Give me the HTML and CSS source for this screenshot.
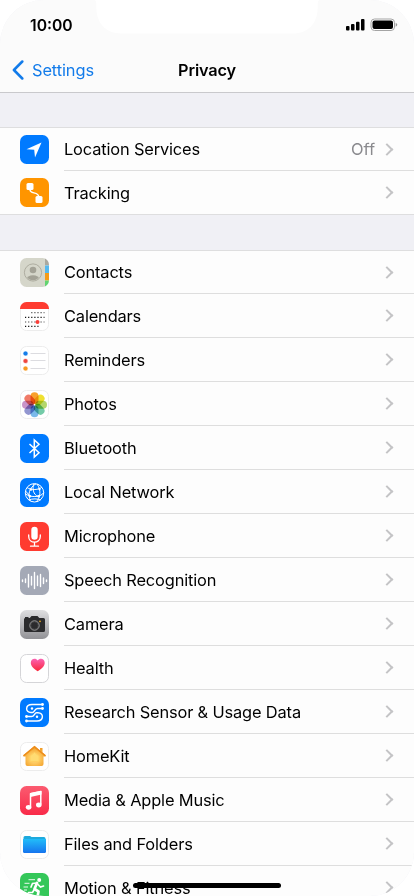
FILE: index.html
```html
<!DOCTYPE html>
<html lang="en">
<head>
<meta charset="utf-8">
<meta name="viewport" content="width=device-width, initial-scale=1">
<title>Privacy</title>
<link rel="stylesheet" href="styles.css">
</head>
<body>
<div class="screen">
  <header class="header">
    <svg class="notch" viewBox="0 0 224 34"><path d="M0 0C2 2 1 5 1.500 11C3 25 12 33.500 26 33.500H198C212 33.500 221 25 222.500 11C223 5 222 2 224 0Z" fill="#fff"/></svg>
    <div class="status">
      <span class="time">10:00</span>
      <svg class="status-icons" width="52" height="14" viewBox="0 0 52 14">
        <rect x="0" y="8" width="3.500" height="4.500" rx="1"/><rect x="5" y="6" width="3.500" height="6.500" rx="1"/><rect x="10" y="3.700" width="3.500" height="8.800" rx="1"/><rect x="15" y="1" width="3.500" height="11.500" rx="1"/>
        <rect x="25" y="1" width="23.500" height="11.500" rx="3.500" fill="#fff" stroke="#a4a4a4"/><rect x="26.500" y="2.500" width="20.500" height="8.500" rx="2"/><path d="M49.700 4.800Q51.300 5.600 51.300 6.800T49.700 8.800Z" fill="#999"/>
      </svg>
    </div>
    <nav class="navbar">
      <a class="back"><svg width="12" height="20" viewBox="0 0 12 20"><path d="M10.300 1.500L1.900 10L10.300 18.500" fill="none" stroke="#127bea" stroke-width="2.500" stroke-linecap="round" stroke-linejoin="round"/></svg><span>Settings</span></a>
      <h1>Privacy</h1>
    </nav>
  </header>
  <main>
    <section class="group">
      <div class="row">
        <svg class="icon" viewBox="0 0 29 29"><rect width="29" height="29" rx="6.500" fill="#007aff"/><path d="M21.500 7.500L6.500 14.300L14.200 14.800L15 22.500Z" fill="#fff"/></svg>
        <div class="cell"><span class="label">Location Services</span><span class="value">Off</span><i class="chevron"></i></div>
      </div>
      <div class="row">
        <svg class="icon" viewBox="0 0 29 29"><rect width="29" height="29" rx="6.500" fill="#ff9500"/><path d="M10 9V11.500C10 17 19 12.500 19 20" fill="none" stroke="#fff" stroke-width="1.500"/><rect x="6.500" y="5" width="7" height="7" rx="1.500" fill="#fff"/><rect x="15.500" y="18" width="7" height="7" rx="1.500" fill="#fff"/></svg>
        <div class="cell"><span class="label">Tracking</span><i class="chevron"></i></div>
      </div>
    </section>
    <section class="group">
      <div class="row">
        <svg class="icon" viewBox="0 0 29 29"><defs><clipPath id="tile"><rect width="29" height="29" rx="6.500"/></clipPath><clipPath id="face"><circle cx="13" cy="14.500" r="7.800"/></clipPath></defs><g clip-path="url(#tile)"><path d="M0 0H25V29H0Z" fill="#d5d6ca"/><path d="M25 0H29V7.500H25Z" fill="#aaa99f"/><path d="M25 7.500H29V15H25Z" fill="#55b9ee"/><path d="M25 15H29V22.500H25Z" fill="#f69b16"/><path d="M25 22.500H29V29H25Z" fill="#62d471"/></g><circle cx="13" cy="14.500" r="8.600" fill="none" stroke="#a3a296" stroke-width=".8"/><g clip-path="url(#face)" fill="#a3a296"><circle cx="13" cy="12" r="3.300"/><ellipse cx="13" cy="21" rx="6.500" ry="3.700"/></g></svg>
        <div class="cell"><span class="label">Contacts</span><i class="chevron"></i></div>
      </div>
      <div class="row">
        <svg class="icon" viewBox="0 0 29 29"><rect x=".5" y=".5" width="28" height="28" rx="6" fill="#fff" stroke="#ececec"/><path d="M0 7V6.500A6.500 6.500 0 0 1 6.500 0H22.500A6.500 6.500 0 0 1 29 6.500V7Z" fill="#fe3b30"/><g fill="none" stroke="#111" stroke-width="1.200" stroke-dasharray="1.200 1.900"><path d="M11.200 10.700H24.500" stroke="#555"/><path d="M5 15.400H24.500"/><path d="M5 20H24.500" stroke="#444"/><path d="M5 24.400H18.500"/></g><circle cx="17.500" cy="20" r="2" fill="#fc3e39"/></svg>
        <div class="cell"><span class="label">Calendars</span><i class="chevron"></i></div>
      </div>
      <div class="row">
        <svg class="icon" viewBox="0 0 29 29"><rect x=".5" y=".5" width="28" height="28" rx="6" fill="#fff" stroke="#ececec"/><g fill="none" stroke="#dcdce0"><path d="M10.500 7.500H25.500M10.500 14.500H25.500M10.500 22.500H25.500"/></g><g stroke-opacity=".35" stroke-width="1.200"><circle cx="5.500" cy="7.500" r="2" fill="#167eea" stroke="#167eea"/><circle cx="5.500" cy="15" r="2" fill="#ef4740" stroke="#ef4740"/><circle cx="5.500" cy="22.500" r="2" fill="#f79a22" stroke="#f79a22"/></g></svg>
        <div class="cell"><span class="label">Reminders</span><i class="chevron"></i></div>
      </div>
      <div class="row">
        <svg class="icon" viewBox="0 0 29 29"><rect x=".5" y=".5" width="28" height="28" rx="6" fill="#fff" stroke="#ececec"/><g class="petals" transform="translate(14.500 14.700)"><rect x="-4" y="-12.500" width="8" height="11.700" rx="4" fill="#f8a02c"/><rect x="-4" y="-12.500" width="8" height="11.700" rx="4" fill="#efe030" transform="rotate(45)"/><rect x="-4" y="-12.500" width="8" height="11.700" rx="4" fill="#b4d66c" transform="rotate(90)"/><rect x="-4" y="-12.500" width="8" height="11.700" rx="4" fill="#74cba8" transform="rotate(135)"/><rect x="-4" y="-12.500" width="8" height="11.700" rx="4" fill="#7ab9ea" transform="rotate(180)"/><rect x="-4" y="-12.500" width="8" height="11.700" rx="4" fill="#9296d0" transform="rotate(225)"/><rect x="-4" y="-12.500" width="8" height="11.700" rx="4" fill="#c994c9" transform="rotate(270)"/><rect x="-4" y="-12.500" width="8" height="11.700" rx="4" fill="#f07b68" transform="rotate(315)"/></g></svg>
        <div class="cell"><span class="label">Photos</span><i class="chevron"></i></div>
      </div>
      <div class="row">
        <svg class="icon" viewBox="0 0 29 29"><rect width="29" height="29" rx="6.500" fill="#007aff"/><path d="M9.500 10L19 18.700L14.300 23V6L19 10.300L9.500 19" fill="none" stroke="#fff" stroke-width="1.500"/></svg>
        <div class="cell"><span class="label">Bluetooth</span><i class="chevron"></i></div>
      </div>
      <div class="row">
        <svg class="icon" viewBox="0 0 29 29"><rect width="29" height="29" rx="6.500" fill="#007aff"/><g fill="none" stroke="#fff" stroke-width="1"><circle cx="14.500" cy="14.800" r="9.200"/><path d="M7 9.500C11 12.500 19 12 22 9M5.300 15.500C9 19.500 21 20 23.700 14.500M9 22C12 20.500 18 20.500 20.500 22M16 5.800C9 9.500 7.500 17 10.500 22.700M17 6C21.500 12 20.500 20 16 24M14 5.700C12 10 13 17 18.500 18.500M5.500 13L10.500 18.500"/></g><g fill="#fff"><circle cx="11" cy="11.500" r="1.200"/><circle cx="19.500" cy="11" r="1.200"/><circle cx="18.700" cy="18.300" r="1.300"/><circle cx="10" cy="18.300" r="1.200"/></g></svg>
        <div class="cell"><span class="label">Local Network</span><i class="chevron"></i></div>
      </div>
      <div class="row">
        <svg class="icon" viewBox="0 0 29 29"><rect width="29" height="29" rx="6.500" fill="#ff3b30"/><rect x="11.300" y="4.700" width="6.400" height="13" rx="3.200" fill="#fff"/><path d="M8.700 13V14.500C8.700 22 20.300 22 20.300 14.500V13M14.500 20.300V24M10.500 24.200H18.500" fill="none" stroke="#fff" stroke-width="1.300" stroke-linecap="round"/></svg>
        <div class="cell"><span class="label">Microphone</span><i class="chevron"></i></div>
      </div>
      <div class="row">
        <svg class="icon" viewBox="0 0 29 29"><rect width="29" height="29" rx="6.500" fill="#a4a9b6"/><path d="M2.500 14V15.500M5.500 13V16.500M8.500 8.500V21M11.500 10.500V19M14.500 6.500V22.500M17.500 10V19.500M20.500 8.500V20.500M23.500 12V17.500M26.500 14V15.500" stroke="#fff" stroke-width="1.400" stroke-linecap="round"/></svg>
        <div class="cell"><span class="label">Speech Recognition</span><i class="chevron"></i></div>
      </div>
      <div class="row">
        <svg class="icon" viewBox="0 0 29 29"><defs><linearGradient id="cam" x2="0" y2="1"><stop stop-color="#dfdfe1"/><stop offset="1" stop-color="#929296"/></linearGradient></defs><rect width="29" height="29" rx="6.500" fill="url(#cam)"/><path d="M5 8V7H8.500V8H9.800L11.500 6H17.500L19.300 8H23.500Q25 8 25 9.500V20.500Q25 22 23.500 22H5.500Q4 22 4 20.500V9.500Q4 8 5 8Z" fill="#2b2b2d"/><circle cx="14.500" cy="15.500" r="4.700" fill="#2b2b2d" stroke="#aaa" stroke-width=".9"/><circle cx="14.500" cy="15.500" r="3.700" fill="none" stroke="#555" stroke-width=".5"/><circle cx="20" cy="11.300" r=".9" fill="#e9a824"/></svg>
        <div class="cell"><span class="label">Camera</span><i class="chevron"></i></div>
      </div>
      <div class="row">
        <svg class="icon" viewBox="0 0 29 29"><defs><linearGradient id="heart" x2="0" y2="1"><stop stop-color="#fb62b2"/><stop offset="1" stop-color="#fa2639"/></linearGradient></defs><rect x=".5" y=".5" width="28" height="28" rx="6" fill="#fff" stroke="#d5d5d8"/><path d="M17.700 17.300C13.500 14.700 10.800 12 10.800 8.700C10.800 4.200 16 3.700 17.700 6.500C19.500 3.700 24.700 4.200 24.700 8.700C24.700 12 22 14.700 17.700 17.300Z" fill="url(#heart)"/></svg>
        <div class="cell"><span class="label">Health</span><i class="chevron"></i></div>
      </div>
      <div class="row">
        <svg class="icon" viewBox="0 0 29 29"><rect width="29" height="29" rx="6.500" fill="#007aff"/><g fill="none" stroke="#fff" stroke-width="1.400"><path d="M22.500 6.500H12C5 6.500 5 14.500 11 14.500H12.500C14.500 14.500 14.500 10.500 17.500 10.500H22.500"/><path d="M6.500 23H17C24 23 24 14.700 18 14.700H16.500C14.500 14.700 14.500 18.500 11.500 18.500H6.500"/></g><g fill="#fff"><circle cx="22.500" cy="6.500" r="1.400"/><circle cx="22.500" cy="10.500" r="1.400"/><circle cx="12" cy="10.500" r="1.200"/><circle cx="6.500" cy="18.500" r="1.400"/><circle cx="6.500" cy="23" r="1.400"/><circle cx="17" cy="18.700" r="1.200"/></g></svg>
        <div class="cell"><span class="label">Research Sensor &amp; Usage Data</span><i class="chevron"></i></div>
      </div>
      <div class="row">
        <svg class="icon" viewBox="0 0 29 29"><defs><radialGradient id="home" cy=".62" r=".6"><stop stop-color="#ffe08a"/><stop offset=".45" stop-color="#fdc65b"/><stop offset="1" stop-color="#f09a24"/></radialGradient></defs><rect x=".5" y=".5" width="28" height="28" rx="6" fill="#fff" stroke="#ececec"/><path d="M14.500 4L20 8.500V6H22.500V10.500L25.500 13V14.500H23.500V22Q23.500 24 21.500 24H7.500Q5.500 24 5.500 22V14.500H3.500V13Z" fill="url(#home)"/><path d="M4 13.500L14.500 4.800L25 13.500" fill="none" stroke="#ed8d1b" stroke-width="1.600" stroke-linecap="round"/><path d="M10 14L14.500 10.500L19 14V19.500H10Z" fill="#ffdb72" stroke="#ffd061"/></svg>
        <div class="cell"><span class="label">HomeKit</span><i class="chevron"></i></div>
      </div>
      <div class="row">
        <svg class="icon" viewBox="0 0 29 29"><defs><linearGradient id="music" x2="0" y2="1"><stop stop-color="#fb5b70"/><stop offset="1" stop-color="#f92b49"/></linearGradient></defs><rect width="29" height="29" rx="6.500" fill="url(#music)"/><path d="M10.500 20.500V7.700L20.800 5.500V18.500" fill="none" stroke="#fff" stroke-width="1.500" stroke-linejoin="round"/><path d="M10.500 7L21.500 4.700V8.600L10.500 10.900Z" fill="#fff"/><ellipse cx="8.600" cy="21.300" rx="2.800" ry="2.400" fill="#fff"/><ellipse cx="18.800" cy="19" rx="2.800" ry="2.400" fill="#fff"/></svg>
        <div class="cell"><span class="label">Media &amp; Apple Music</span><i class="chevron"></i></div>
      </div>
      <div class="row">
        <svg class="icon" viewBox="0 0 29 29"><defs><linearGradient id="files" x2="0" y2="1"><stop stop-color="#22bdf9"/><stop offset="1" stop-color="#1674ee"/></linearGradient></defs><rect x=".5" y=".5" width="28" height="28" rx="6" fill="#fff" stroke="#ececec"/><path d="M3.500 11V7.500Q3.500 6 5 6H9.500Q10.500 6 11.500 7H24Q25.500 7 25.500 8.500V11Z" fill="#1eaadd"/><path d="M3 9H26V21.500Q26 23 24.500 23H4.500Q3 23 3 21.500Z" fill="url(#files)"/></svg>
        <div class="cell"><span class="label">Files and Folders</span><i class="chevron"></i></div>
      </div>
      <div class="row">
        <svg class="icon" viewBox="0 0 29 29"><rect width="29" height="29" rx="6.500" fill="#34c759"/><circle cx="19.200" cy="7" r="2" fill="#fff"/><path d="M17 10L14.500 16L18.500 18.500L17.500 24" fill="none" stroke="#fff" stroke-width="2.700" stroke-linecap="round" stroke-linejoin="round"/><path d="M17 10L12.500 10.500L11 14M18 11.500L20.500 14L23.500 13M14 17L12.500 19.500H8.500" fill="none" stroke="#fff" stroke-width="1.700" stroke-linecap="round"/><path d="M8.500 6.700H15M4.500 10.300H9.500M3.500 14H8M4 17H7" stroke="#fff" stroke-width=".9"/></svg>
        <div class="cell"><span class="label">Motion &amp; Fitness</span><i class="chevron"></i></div>
      </div>
    </section>
  </main>
  <div class="home-indicator"></div>
</div>
</body>
</html>
```

FILE: styles.css
```css
* { box-sizing: border-box; }
html, body { margin: 0; height: 896px; overflow: hidden; background: #fff; }
body { font-family: Inter, "Liberation Sans", sans-serif; color: #000; }
.screen { position: relative; width: 414px; height: 896px; overflow: hidden; border-radius: 44px; background: #f0f0f5; }
.header { position: relative; height: 93px; background: #fbfbfb; border-bottom: 1px solid #c9c9cc; }
.notch { position: absolute; top: 0; left: 95px; width: 224px; height: 34px; }
.status { position: relative; display: flex; justify-content: space-between; align-items: center; height: 49px; padding: 1px 16px 0 30px; }
.time { font-size: 15.7px; font-weight: 600; letter-spacing: 0; }
.navbar { display: grid; grid-template-columns: 1fr auto 1fr; align-items: center; height: 42px; padding: 0 12px; }
.back { display: flex; align-items: center; gap: 8px; color: #127bea; font-size: 16.4px; letter-spacing: -0.1px; }
h1 { margin: 0; font-size: 16.3px; font-weight: 600; letter-spacing: -0.15px; }
.group { margin-top: 34px; border-top: 1px solid #dededf; border-bottom: 1px solid #dededf; background: #fdfdfd; }
.group + .group { margin-top: 35px; }
.row { display: flex; align-items: center; height: 44px; padding-left: 20px; }
.row:first-child, .row:last-child { height: 43px; }
.icon { flex: none; width: 29px; height: 29px; margin-right: 15px; }
.cell { display: flex; flex: 1; align-items: center; align-self: stretch; padding-right: 20px; border-bottom: 1px solid #dedede; }
.row:last-child .cell { border-bottom: 0; }
.label { flex: 1; font-size: 16.4px; letter-spacing: -0.15px; white-space: nowrap; }
.value { margin-right: 8px; color: #8a8a8e; font-size: 16.4px; }
.chevron { width: 9px; height: 9px; margin-right: 2px; border: solid #c4c4c6; border-width: 2px 2px 0 0; transform: translateX(-0.5px) rotate(45deg); }
.petals rect { mix-blend-mode: multiply; }
.home-indicator { position: absolute; left: 133px; bottom: 8px; width: 148px; height: 5px; border-radius: 3px; background: #000; }
```
